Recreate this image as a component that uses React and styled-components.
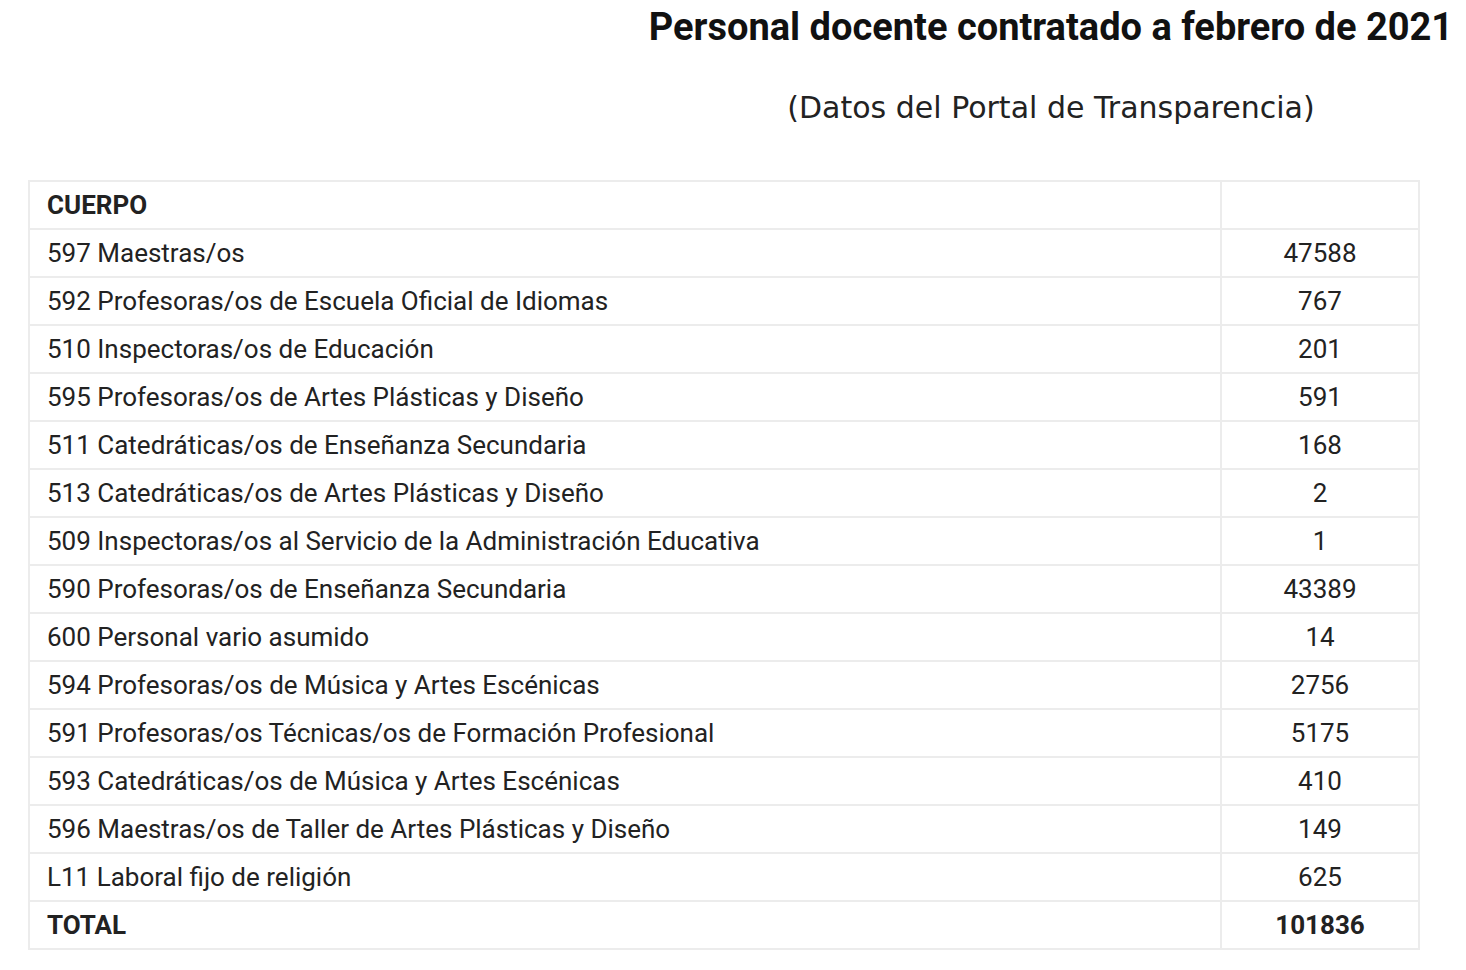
import React from 'react';
import styled, { createGlobalStyle } from 'styled-components';

const GlobalStyle = createGlobalStyle`
  body {
    margin: 0;
    background: #fff;
    font-family: Roboto, "Liberation Sans", sans-serif;
    color: #222;
  }
`;

const Page = styled.div`
  padding: 0 46px 0 28px;
`;

// header block sits to the right, centred over the right part of the page
const Header = styled.header`
  padding-left: 608px;
  margin-right: -46px;
  text-align: center;
`;

const Title = styled.h1`
  margin: 0;
  padding-top: 5px;
  font-family: Roboto, "Liberation Sans", sans-serif;
  font-size: 38px;
  font-weight: 700;
  font-stretch: 95%;
  line-height: 44px;
  color: #111;
  white-space: nowrap;
`;

const Subtitle = styled.p`
  margin: 40px 0 0;
  font-family: "DejaVu Sans", Verdana, sans-serif;
  font-size: 30px;
  line-height: 38px;
  color: #222;
`;

const Table = styled.table`
  margin-top: 53px;
  width: 1392px;
  border-collapse: collapse;
  border: 2px solid #ececec;
`;

const Cell = styled.td`
  height: 46px;
  padding: 0 0 0 17px;
  border: 2px solid #ececec;
  font-size: 26px;
  font-weight: ${p => (p.$bold ? 700 : 400)};
  color: #222;
  text-align: left;

  &:last-child {
    width: 196px;
    padding: 0;
    text-align: center;
  }
`;

const rows = [
  ['597 Maestras/os', '47588'],
  ['592 Profesoras/os de Escuela Oficial de Idiomas', '767'],
  ['510 Inspectoras/os de Educación', '201'],
  ['595 Profesoras/os de Artes Plásticas y Diseño', '591'],
  ['511 Catedráticas/os de Enseñanza Secundaria', '168'],
  ['513 Catedráticas/os de Artes Plásticas y Diseño', '2'],
  ['509 Inspectoras/os al Servicio de la Administración Educativa', '1'],
  ['590 Profesoras/os de Enseñanza Secundaria', '43389'],
  ['600 Personal vario asumido', '14'],
  ['594 Profesoras/os de Música y Artes Escénicas', '2756'],
  ['591 Profesoras/os Técnicas/os de Formación Profesional', '5175'],
  ['593 Catedráticas/os de Música y Artes Escénicas', '410'],
  ['596 Maestras/os de Taller de Artes Plásticas y Diseño', '149'],
  ['L11 Laboral fijo de religión', '625'],
];

const App = () => (
  <>
    <GlobalStyle />
    <Page>
      <Header>
        <Title>Personal docente contratado a febrero de 2021</Title>
        <Subtitle>(Datos del Portal de Transparencia)</Subtitle>
      </Header>
      <Table>
        <tbody>
          <tr>
            <Cell $bold>CUERPO</Cell>
            <Cell />
          </tr>
          {rows.map(([name, count]) => (
            <tr key={name}>
              <Cell>{name}</Cell>
              <Cell>{count}</Cell>
            </tr>
          ))}
          <tr>
            <Cell $bold>TOTAL</Cell>
            <Cell $bold>101836</Cell>
          </tr>
        </tbody>
      </Table>
    </Page>
  </>
);

export default App;
